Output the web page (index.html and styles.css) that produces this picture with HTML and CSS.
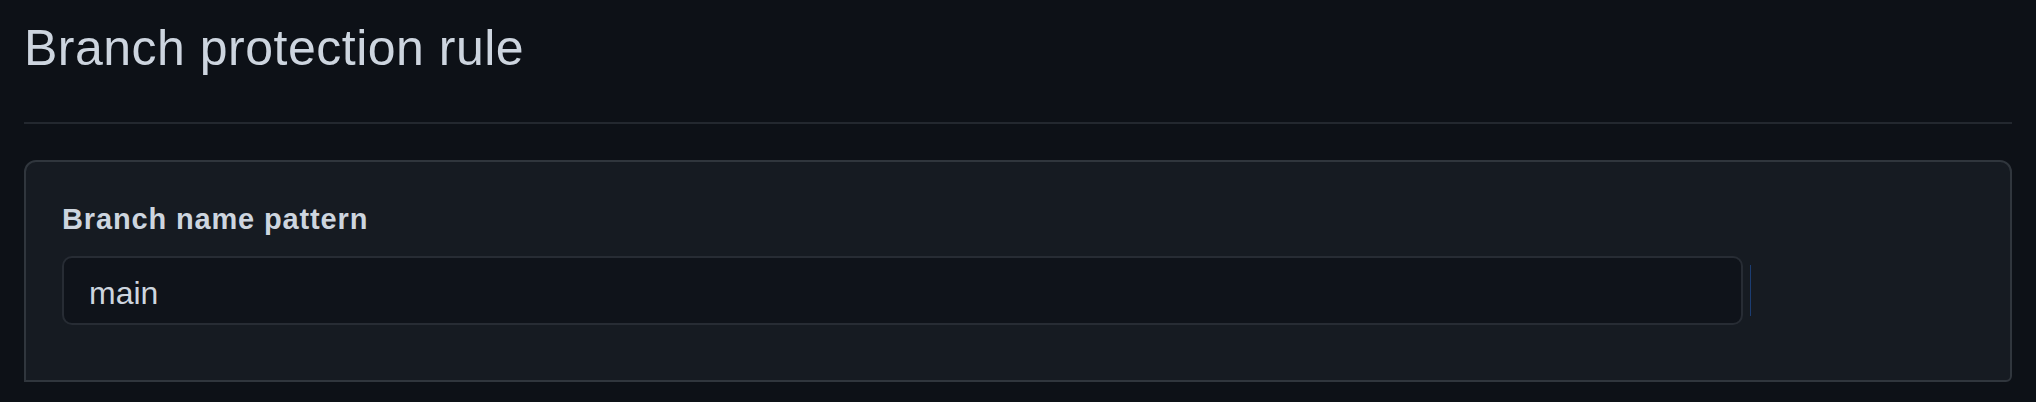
FILE: index.html
```html
<!DOCTYPE html>
<html lang="en">
<head>
<meta charset="utf-8">
<title>Branch protection rule</title>
<link rel="stylesheet" href="styles.css">
</head>
<body>
<main class="page">
  <header class="page-head">
    <h1 class="page-title">Branch protection rule</h1>
  </header>
  <section class="card">
    <label class="field-label" for="pattern">Branch name pattern</label>
    <div class="field-row">
      <div class="text-input" id="pattern">main</div>
      <span class="focus-mark"></span>
    </div>
  </section>
</main>
</body>
</html>
```

FILE: styles.css
```css
html, body {
  margin: 0;
  padding: 0;
  background: #0d1117;
}

body {
  font-family: "Liberation Sans", Arial, sans-serif;
  color: #c9d1d9;
}

.page {
  padding: 18px 24px 0 24px;
}

.page-head {
  padding-bottom: 44px;
  border-bottom: 2px solid #23282f;
}

.page-title {
  margin: 0;
  font-size: 50px;
  line-height: 60px;
  font-weight: 400;
  letter-spacing: 0.5px;
  color: #cdd5df;
}

.card {
  margin-top: 36px;
  background: #161b22;
  border: 2px solid #30363d;
  border-radius: 12px 12px 6px 0;
  padding: 39px 36px 55px 36px;
}

.field-label {
  display: block;
  font-size: 29px;
  line-height: 36px;
  font-weight: 700;
  letter-spacing: 0.85px;
  color: #cdd5df;
}

.field-row {
  display: flex;
  align-items: center;
  gap: 7px;
  margin-top: 19px;
}

.text-input {
  box-sizing: border-box;
  width: 1681px;
  height: 69px;
  padding: 17px 24px 0 25px;
  background: #0f131a;
  border: 2px solid #272c34;
  border-radius: 10px;
  font-size: 32px;
  line-height: 36px;
  color: #cdd5df;
}

.focus-mark {
  display: block;
  width: 1px;
  height: 51px;
  background: #1c3d72;
}
```
